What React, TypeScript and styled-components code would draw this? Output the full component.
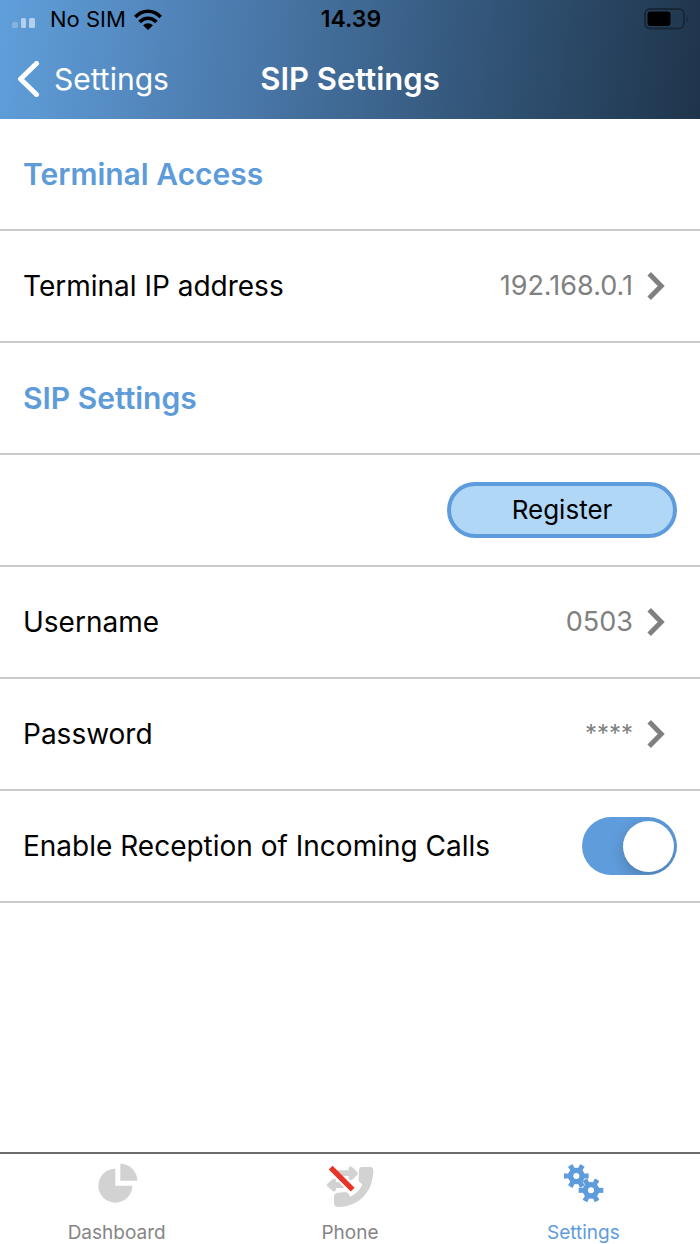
import React, { useState } from "react";
import styled, { createGlobalStyle } from "styled-components";

const GlobalStyle = createGlobalStyle`
  *, *::before, *::after { box-sizing: border-box; }
  body {
    margin: 0;
    background: #fff;
    color: #000;
    font-family: Inter, "Liberation Sans", sans-serif;
  }
  button { font: inherit; color: inherit; cursor: pointer; }
`;

const Screen = styled.div`
  display: flex;
  flex-direction: column;
  min-height: 100vh;
`;

const Header = styled.header`
  background: linear-gradient(97deg, #609fdb 0%, #4b7aac 34%, #34587c 66%, #1f344b 100%);
`;

const StatusBar = styled.div`
  display: grid;
  grid-template-columns: 1fr auto 1fr;
  align-items: center;
  height: 38px;
  padding: 0 10px 0 12px;
  font-size: 22px;
  line-height: 28px;
`;

const Carrier = styled.div`
  display: flex;
  align-items: center;
  gap: 8px;
`;

const CarrierName = styled.span`
  padding-left: 6px;
`;

const Clock = styled.time`
  font-size: 23px;
  font-weight: 600;
`;

const BatteryIcon = styled.svg`
  justify-self: end;
`;

const NavBar = styled.nav`
  display: grid;
  grid-template-columns: 1fr auto 1fr;
  align-items: center;
  height: 81px;
  padding: 0 16px;
  color: #fff;
  font-size: 30px;
  line-height: 40px;
`;

const BackButton = styled.button`
  display: flex;
  align-items: center;
  justify-self: start;
  gap: 14px;
  padding: 0;
  border: 0;
  background: none;
`;

const Title = styled.h1`
  margin: 0;
  font-size: 31px;
  font-weight: 600;
`;

const Content = styled.main`
  flex: 1;
`;

const Row = styled.div`
  display: flex;
  align-items: center;
  justify-content: space-between;
  width: 100%;
  height: 112px;
  padding: 0 23px;
  border: 0;
  border-bottom: 2px solid #cbcbcb;
  background: #fff;
  font-size: 28px;
  line-height: 40px;
  text-align: left;
`;

const SectionTitle = styled.h2`
  margin: 0;
  color: #5e9bd9;
  font-size: 30px;
  font-weight: 600;
`;

const Value = styled.span<{ $masked?: boolean }>`
  display: flex;
  align-items: center;
  gap: 14px;
  padding-right: 12px;
  color: #808080;
  font-size: ${(p) => (p.$masked ? 24 : 27)}px;
`;

const RegisterButton = styled.button`
  width: 230px;
  height: 56px;
  margin-left: auto;
  border: 4px solid #5e9bdc;
  border-radius: 28px;
  background: #b0d7f6;
  font-size: 26px;
  line-height: 32px;
`;

const Switch = styled.input`
  appearance: none;
  display: flex;
  align-items: center;
  width: 95px;
  height: 58px;
  margin: 0;
  padding: 0 3px;
  border-radius: 29px;
  background: #d8d8d8;
  overflow: hidden;
  cursor: pointer;

  &::before {
    content: "";
    width: 51px;
    height: 51px;
    border-radius: 50%;
    background: #fff;
    box-shadow: 0 5px 14px rgba(0, 0, 0, 0.2);
  }

  &:checked {
    justify-content: flex-end;
    background: #5f9cdb;
  }
`;

const TabBar = styled.nav`
  display: grid;
  grid-template-columns: repeat(3, 1fr);
  height: 92px;
  border-top: 2px solid #6c6c6c;
`;

const Tab = styled.button<{ $active?: boolean }>`
  display: flex;
  flex-direction: column;
  align-items: center;
  gap: 11px;
  padding: 8px 0 0;
  border: 0;
  background: none;
  color: ${(p) => (p.$active ? "#5f9cdb" : "#858585")};
  font-size: 19px;
  line-height: 24px;
`;

const TabIcon = styled.svg`
  flex: none;
  width: 48px;
  height: 48px;
  overflow: visible;
`;

const Chevron = () => (
  <svg width="18" height="28" viewBox="0 0 18 28" fill="none" stroke="#808080" strokeWidth="5">
    <path d="M2.2 1.8 14.2 14 2.2 26.2" />
  </svg>
);

const SignalIcon = () => (
  <svg width="24" height="18" viewBox="0 0 24 18">
    <rect x="0" y="12" width="6" height="6" rx="1.5" fill="#86b4e0" />
    <rect x="9" y="8" width="5" height="10" rx="1.5" fill="#b4d0ec" />
    <rect x="17" y="8" width="6" height="10" rx="1.5" fill="#b4d0ec" />
  </svg>
);

const WifiIcon = () => (
  <svg width="28" height="21" viewBox="405 26 84 63" fill="none" stroke="#000" strokeWidth="11">
    <path d="M409 50C431 27 463 27 485 50" />
    <path d="M422 65C436 50 458 50 472 65" />
    <path d="M447 89 432 75C441 67 453 67 462 75Z" fill="#000" stroke="none" />
  </svg>
);

const Battery = () => (
  <BatteryIcon width="46" height="22" viewBox="0 0 46 22" role="img" aria-label="Battery">
    <rect x="1" y="1" width="39" height="19.5" rx="5" fill="none" stroke="#172737" strokeWidth="1.8" />
    <rect x="3.5" y="3.6" width="23" height="14.4" rx="3" fill="#000" />
    <path d="M42.6 7.5Q45 10.7 42.6 14Z" fill="#172737" />
  </BatteryIcon>
);

const DashboardIcon = () => (
  <TabIcon viewBox="126 54 144 144" fill="#d2d2d2">
    <path d="M193 74V125H244A51 51 0 1 1 193 74Z" />
    <path d="M208 59A51 51 0 0 1 259 110H208Z" />
  </TabIcon>
);

const PhoneIcon = () => (
  <TabIcon viewBox="107 54 144 144" fill="#d2d2d2">
    <path d="M213 69H240Q250 70 249 81C247 145 206 187 145 189Q132 190 131 178V158Q131 147 142 146L165 144Q174 145 177 153L180 158C198 149 209 138 216 121L209 116Q204 112 205 105L206 77Q207 70 213 69Z" />
    <path d="M138 79H175V71Q179 65 185 69L201 84Q204 88 201 92L186 107Q180 110 175 105V96H150Z" />
    <path d="M111 119 127 105Q133 102 137 107V114H172L190 132H137V139Q133 145 127 141L111 127Q108 123 111 119Z" />
    <path d="M119 79 179 141" stroke="#fff" strokeWidth="10" />
    <path d="M121 71 187 137" stroke="#e63429" strokeWidth="16" />
  </TabIcon>
);

const Gear = ({ x, y }: { x: number; y: number }) => (
  <g transform={`translate(${x} ${y})`}>
    <circle r="17" fill="none" stroke="currentColor" strokeWidth="16" />
    {[0, 60, 120, 180, 240, 300].map((angle) => (
      <path
        key={angle}
        d="M16-13Q22-8 26-7L34-8Q37-8 37-5V5Q37 8 34 8L26 7Q22 8 16 13Z"
        fill="currentColor"
        transform={`rotate(${angle})`}
      />
    ))}
  </g>
);

const SettingsIcon = () => (
  <TabIcon viewBox="101 54 144 144">
    <Gear x={153} y={96} />
    <Gear x={197} y={139} />
  </TabIcon>
);

export default function App() {
  const [incoming, setIncoming] = useState(true);

  return (
    <Screen>
      <GlobalStyle />
      <Header>
        <StatusBar>
          <Carrier>
            <SignalIcon />
            <CarrierName>No SIM</CarrierName>
            <WifiIcon />
          </Carrier>
          <Clock>14.39</Clock>
          <Battery />
        </StatusBar>
        <NavBar>
          <BackButton type="button">
            <svg width="24" height="36" viewBox="0 0 24 36" fill="none" stroke="#fff" strokeWidth="5" strokeLinecap="round" strokeLinejoin="round">
              <path d="M20.5 2.5 4.5 18 20.5 33.5" />
            </svg>
            Settings
          </BackButton>
          <Title>SIP Settings</Title>
        </NavBar>
      </Header>

      <Content>
        <Row>
          <SectionTitle>Terminal Access</SectionTitle>
        </Row>
        <Row as="button">
          Terminal IP address
          <Value>192.168.0.1<Chevron /></Value>
        </Row>
        <Row>
          <SectionTitle>SIP Settings</SectionTitle>
        </Row>
        <Row>
          <RegisterButton type="button">Register</RegisterButton>
        </Row>
        <Row as="button">
          Username
          <Value>0503<Chevron /></Value>
        </Row>
        <Row as="button">
          Password
          <Value $masked>****<Chevron /></Value>
        </Row>
        <Row>
          <label htmlFor="incoming">Enable Reception of Incoming Calls</label>
          <Switch
            id="incoming"
            type="checkbox"
            role="switch"
            checked={incoming}
            onChange={(e) => setIncoming(e.target.checked)}
          />
        </Row>
      </Content>

      <TabBar>
        <Tab type="button"><DashboardIcon />Dashboard</Tab>
        <Tab type="button"><PhoneIcon />Phone</Tab>
        <Tab type="button" $active aria-current="page"><SettingsIcon />Settings</Tab>
      </TabBar>
    </Screen>
  );
}
